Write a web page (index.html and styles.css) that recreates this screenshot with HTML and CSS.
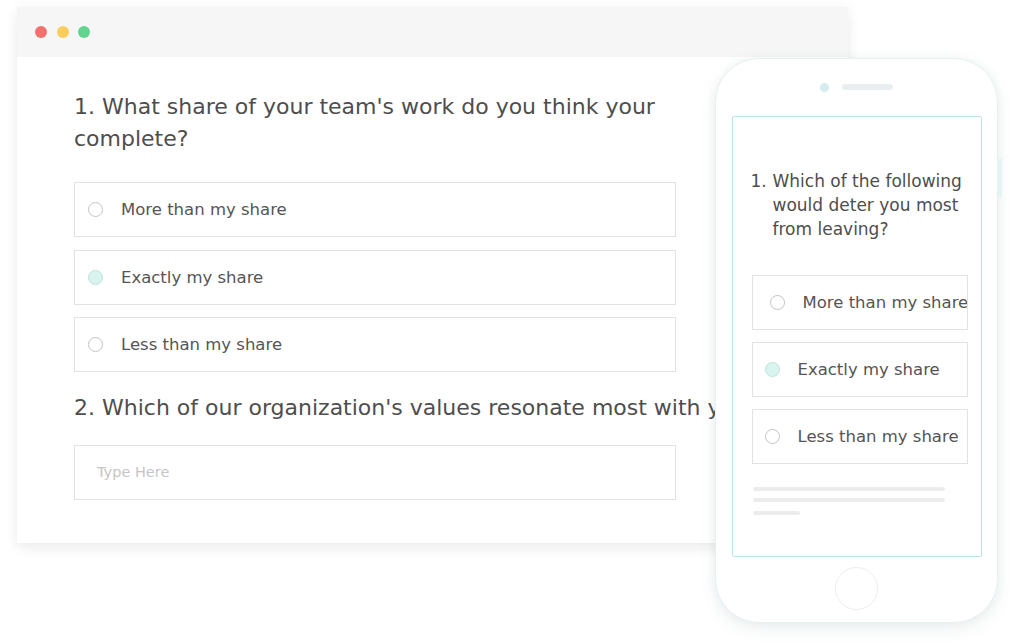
FILE: index.html
```html
<!DOCTYPE html>
<html lang="en">
<head>
<meta charset="utf-8">
<title>Survey preview</title>
<link rel="stylesheet" href="styles.css">
</head>
<body>
<div class="stage">
  <div class="window">
    <div class="titlebar">
      <span class="dot dot-red"></span>
      <span class="dot dot-yellow"></span>
      <span class="dot dot-green"></span>
    </div>
    <div class="content">
      <h2 class="question q1">1. What share of your team's work do you think your complete?</h2>
      <div class="options">
        <div class="option"><span class="radio"></span><span class="label">More than my share</span></div>
        <div class="option"><span class="radio radio-on"></span><span class="label">Exactly my share</span></div>
        <div class="option"><span class="radio"></span><span class="label">Less than my share</span></div>
      </div>
      <h2 class="question q2">2. Which of our organization's values resonate most with you?</h2>
      <div class="input"><span class="placeholder">Type Here</span></div>
    </div>
  </div>

  <div class="phone">
    <div class="side-button"></div>
    <div class="phone-top">
      <span class="camera"></span>
      <span class="speaker"></span>
    </div>
    <div class="screen">
      <div class="m-question"><span class="num">1.</span><span class="qtext">Which of the following would deter you most from leaving?</span></div>
      <div class="m-options">
        <div class="m-option m-shift"><span class="radio"></span><span class="m-label">More than my share</span></div>
        <div class="m-option"><span class="radio radio-on"></span><span class="m-label">Exactly my share</span></div>
        <div class="m-option"><span class="radio"></span><span class="m-label">Less than my share</span></div>
      </div>
      <div class="lines">
        <span class="line line-long"></span>
        <span class="line line-long"></span>
        <span class="line line-short"></span>
      </div>
    </div>
    <div class="phone-bottom">
      <span class="home"></span>
    </div>
  </div>
</div>
</body>
</html>
```
FILE: styles.css
```css
* { box-sizing: border-box; }

html, body {
  margin: 0;
  padding: 0;
  background: #ffffff;
}

body {
  width: 1024px;
  height: 644px;
  overflow: hidden;
  font-family: "DejaVu Sans", "Liberation Sans", sans-serif;
  color: #505050;
}

.stage {
  position: relative;
  width: 1024px;
  height: 644px;
  padding-top: 7px;
}

/* Desktop window */
.window {
  margin-left: 17px;
  width: 831px;
  height: 536px;
  background: #ffffff;
  box-shadow: 0 6px 12px rgba(0, 0, 0, 0.06), 0 0 14px rgba(0, 0, 0, 0.035);
}

.titlebar {
  height: 50px;
  background: #f6f6f6;
  display: flex;
  align-items: center;
  gap: 9.5px;
  padding-left: 18px;
  padding-bottom: 1px;
}

.dot {
  width: 12px;
  height: 12px;
  border-radius: 50%;
  display: block;
}
.dot-red { background: #f2716f; }
.dot-yellow { background: #fccd5c; }
.dot-green { background: #62d48e; }

.content {
  padding: 34px 0 0 57px;
}

.question {
  margin: 0;
  font-weight: normal;
  font-size: 22px;
  line-height: 32px;
  color: #4e4e4e;
}

.q1 { width: 603px; }

.q2 {
  white-space: nowrap;
  margin-top: 20px;
}

.options {
  margin-top: 27px;
  width: 602px;
  display: flex;
  flex-direction: column;
  gap: 12.5px;
}

.option {
  height: 55px;
  border: 1px solid #e2e2e2;
  display: flex;
  align-items: center;
  padding-left: 13px;
}

.radio {
  flex: none;
  width: 15px;
  height: 15px;
  border-radius: 50%;
  border: 1.5px solid #c4c4c4;
  background: #ffffff;
}

.radio-on {
  background: #d9f3ee;
  border-color: #bfe3db;
}

.label {
  margin-left: 18px;
  font-size: 16.5px;
  color: #555555;
  white-space: nowrap;
}

.input {
  margin-top: 20.5px;
  width: 602px;
  height: 55px;
  border: 1px solid #e2e2e2;
  display: flex;
  align-items: center;
  padding-left: 22px;
}

.placeholder {
  font-size: 14.5px;
  color: #c6c6c6;
}

/* Phone */
.phone {
  position: absolute;
  left: 715px;
  top: 58px;
  width: 283px;
  height: 565px;
  background: #ffffff;
  border: 1px solid #e4f1f1;
  border-radius: 44px;
  box-shadow: 0 6px 16px rgba(90, 120, 120, 0.10), 0 0 8px rgba(120, 160, 160, 0.08);
  display: flex;
  flex-direction: column;
  align-items: center;
}

.side-button {
  position: absolute;
  right: -5px;
  top: 99px;
  width: 4px;
  height: 40px;
  border-radius: 0 3px 3px 0;
  background: #e6f3f3;
}

.phone-top {
  height: 57px;
  display: flex;
  align-items: center;
  justify-content: center;
  gap: 12.5px;
  padding-bottom: 1px;
}

.camera {
  width: 9px;
  height: 9px;
  border-radius: 50%;
  background: #d6ebec;
}

.speaker {
  width: 51px;
  height: 6px;
  border-radius: 3px;
  background: #e9eff0;
}

.screen {
  width: 250px;
  height: 441px;
  border: 1px solid #bfe2e5;
  border-radius: 2px;
  padding: 52px 0 0 18px;
}

.m-question {
  display: flex;
  font-size: 17px;
  line-height: 24px;
  color: #4e4e4e;
}

.num {
  flex: none;
  width: 22px;
}

.qtext {
  width: 200px;
}

.m-options {
  margin-top: 34px;
  margin-left: 1px;
  width: 216px;
  display: flex;
  flex-direction: column;
  gap: 12.5px;
}

.m-option {
  height: 54.5px;
  border: 1px solid #e2e2e2;
  display: flex;
  align-items: center;
  padding-left: 12px;
  overflow: hidden;
}

.m-shift { padding-left: 17px; }

.m-label {
  margin-left: 18px;
  font-size: 16.5px;
  color: #555555;
  white-space: nowrap;
}

.lines {
  margin-top: 23px;
  margin-left: 2px;
  display: flex;
  flex-direction: column;
}

.line {
  display: block;
  height: 4px;
  border-radius: 2px;
  background: #ececec;
}
.line + .line { margin-top: 7.5px; }
.line-long { width: 192px; }
.line-short { width: 47px; margin-top: 8.5px !important; }

.phone-bottom {
  flex: 1;
  display: flex;
  align-items: center;
  justify-content: center;
  padding-bottom: 2px;
}

.home {
  width: 43px;
  height: 43px;
  border-radius: 50%;
  border: 1px solid #e8eeee;
}
```
